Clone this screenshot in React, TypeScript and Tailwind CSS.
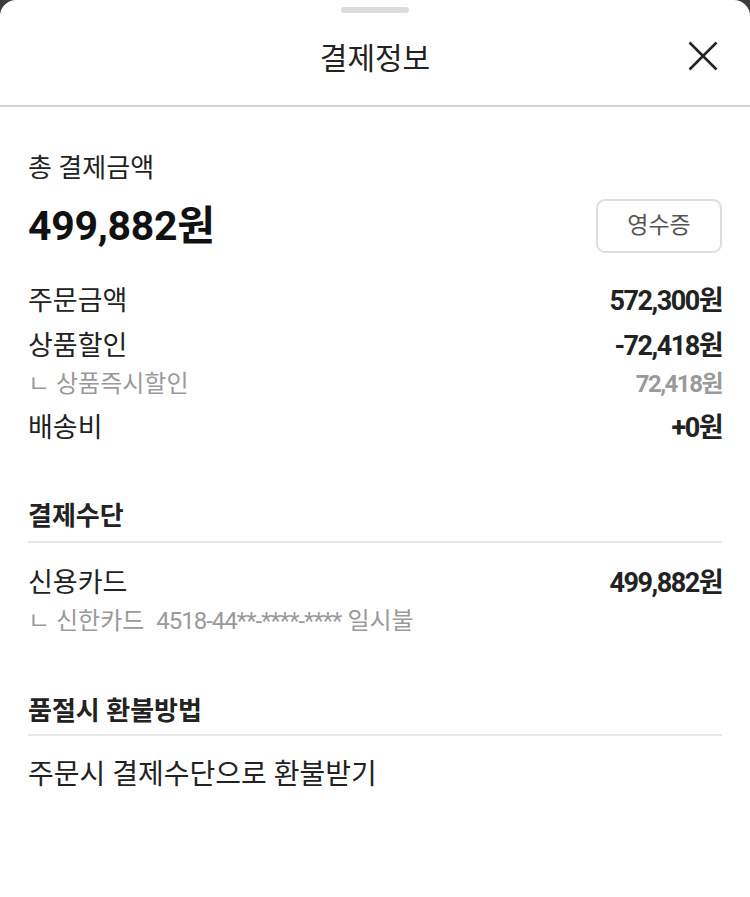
import React from "react";

const font = { fontFamily: "Roboto, 'Noto Sans CJK KR', sans-serif" };

const Row = ({ label, value, sub }: { label: string; value: string; sub?: boolean }) => (
	<div
		className={`flex items-center justify-between ${
			sub ? "h-[37px] pb-[8px] text-[24px] text-[#9a9a9a]" : "h-[45px] text-[27px] text-[#222]"
		}`}
	>
		<span>{label}</span>
		<span className="font-bold tracking-[-1.5px]">{value}</span>
	</div>
);

export default function App() {
	return (
		<div className="w-[750px] h-[897px] bg-[#3c3c3c]" style={font}>
			<div className="h-full bg-white rounded-t-[16px] overflow-hidden">
				{/* header */}
				<div className="relative h-[107px] border-b-2 border-[#d4d4d4]">
					<div className="absolute left-1/2 top-[7px] -translate-x-1/2 w-[68px] h-[6px] rounded-full bg-[#dcdcdc]" />
					<h2 className="pt-[40px] text-center text-[30px] text-[#222] leading-[38px]">결제정보</h2>
					<button className="absolute right-[32px] top-[41px] w-[30px] h-[30px]" aria-label="close">
						<svg viewBox="0 0 30 30" className="w-full h-full" fill="none" stroke="#222" strokeWidth="2.5">
							<path d="M1.5 1.5 L28.5 28.5 M28.5 1.5 L1.5 28.5" />
						</svg>
					</button>
				</div>

				<div className="px-[28px] pt-[46px]">
					<p className="text-[26px] text-[#222] leading-[30px]">총 결제금액</p>
					<div className="mt-[16px] flex items-center justify-between">
						<span className="text-[41px] font-bold text-[#111] tracking-[-0.3px] leading-[54px]">499,882원</span>
						<button className="w-[126px] h-[54px] rounded-[9px] border-2 border-[#dedede] text-[23px] text-[#555]">
							영수증
						</button>
					</div>

					<div className="mt-[26px]">
						<Row label="주문금액" value="572,300원" />
						<Row label="상품할인" value="-72,418원" />
						<Row label="ㄴ 상품즉시할인" value="72,418원" sub />
						<Row label="배송비" value="+0원" />
					</div>

					<div className="mt-[50px]">
						<h3 className="text-[26px] font-bold text-[#222] leading-[30px]">결제수단</h3>
						<div className="mt-[10px] h-[2px] bg-[#e8e8e8]" />
						<div className="pt-[18px]">
							<Row label="신용카드" value="499,882원" />
							<p className="text-[24px] text-[#9a9a9a] leading-[30px]">
								ㄴ 신한카드&nbsp;&nbsp;<span className="tracking-[-1px]">4518-44**-****-****</span> 일시불
							</p>
						</div>
					</div>

					<div className="mt-[60px]">
						<h3 className="text-[26px] font-bold text-[#222] leading-[30px]">품절시 환불방법</h3>
						<div className="mt-[8px] h-[2px] bg-[#e8e8e8]" />
						<p className="pt-[19px] text-[28px] text-[#222] leading-[40px]">주문시 결제수단으로 환불받기</p>
					</div>
				</div>
			</div>
		</div>
	);
}
